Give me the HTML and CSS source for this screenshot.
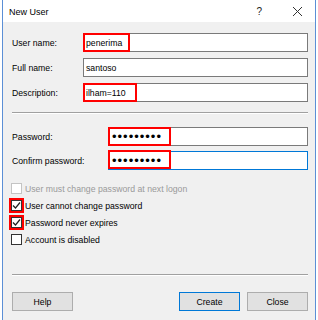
FILE: index.html
```html
<!DOCTYPE html>
<html>
<head lang="en">
<meta charset="UTF-8">
<title>New User</title>
<link rel="stylesheet" href="styles.css">
</head>
<body>
  <div class="window">
    <div class="titlebar">
      <span class="title">New User</span>
      <span class="help-q">?</span>
      <svg class="close-x" width="11" height="11" viewBox="0 0 11 11">
        <path d="M1 1 L10 10 M10 1 L1 10" stroke="#333" stroke-width="1" fill="none"/>
      </svg>
    </div>

    <div class="client">
      <div class="group">
        <div class="field">
          <label>User name:</label>
          <div class="input"><span class="val">penerima</span><span class="mark" style="width:47px"></span></div>
        </div>
        <div class="field">
          <label>Full name:</label>
          <div class="input"><span class="val">santoso</span></div>
        </div>
        <div class="field">
          <label>Description:</label>
          <div class="input"><span class="val">ilham=110</span><span class="mark" style="width:54px"></span></div>
        </div>
      </div>

      <div class="sep"></div>

      <div class="group pw">
        <div class="field">
          <label>Password:</label>
          <div class="input"><span class="dots">&bull;&bull;&bull;&bull;&bull;&bull;&bull;&bull;&bull;</span><span class="mark" style="width:63px"></span></div>
        </div>
        <div class="field">
          <label>Confirm password:</label>
          <div class="input focus"><span class="dots">&bull;&bull;&bull;&bull;&bull;&bull;&bull;&bull;&bull;</span><span class="mark up" style="width:63px"></span></div>
        </div>
      </div>

      <div class="checks">
        <div class="check disabled"><span class="box"></span>User must change password at next logon</div>
        <div class="check"><span class="box checked"><svg width="9" height="9" viewBox="0 0 9 9"><path d="M1 4.5 L3.5 7 L8 1.5" stroke="#222" stroke-width="1.2" fill="none"/></svg><span class="cmark"></span></span>User cannot change password</div>
        <div class="check"><span class="box checked"><svg width="9" height="9" viewBox="0 0 9 9"><path d="M1 4.5 L3.5 7 L8 1.5" stroke="#222" stroke-width="1.2" fill="none"/></svg><span class="cmark"></span></span>Password never expires</div>
        <div class="check"><span class="box"></span>Account is disabled</div>
      </div>

      <div class="sep bottom"></div>

      <div class="buttons">
        <div class="button">Help</div>
        <div class="spacer"></div>
        <div class="button default">Create</div>
        <div class="button">Close</div>
      </div>
    </div>
  </div>
</body>
</html>
```

FILE: styles.css
```css
body {
margin: 0;
background: #fff;
color: #000;
font-family: "Liberation Sans", Arial, sans-serif;
font-size: 8.7px;
}
.window {
margin-left: 2px;
width: 314px;
height: 320px;
box-sizing: border-box;
border-left: 1px solid #5b8fd6;
border-right: 1px solid #5b8fd6;
display: flex;
flex-direction: column;
}
.titlebar {
height: 22px;
background: #fff;
display: flex;
align-items: center;
padding: 1px 0 0 6px;
box-sizing: border-box;
}
.title { font-size: 9px; color: #000; }
.help-q { margin-left: auto; font-size: 10px; color: #222; margin-right: 30px; }
.close-x { margin-right: 12px; }
.client {
flex: 1;
background: #f0f0f0;
padding: 11px 7px 0 9px;
}
.group { display: flex; flex-direction: column; gap: 6px; }
.group.pw { gap: 5px; }
.field { display: flex; height: 19px; align-items: center; }
.field label { width: 71px; flex: none; }
.pw .field label { width: 96px; }
.input {
position: relative;
flex: 1;
height: 19px;
box-sizing: border-box;
background: #fff;
border: 1px solid #7a7a7a;
display: flex;
align-items: center;
padding-left: 2px;
}
.input.focus { border-color: #0078d7; }
.dots { font-size: 13px; letter-spacing: 1px; line-height: 17px; padding-left: 1px; }
.mark {
position: absolute;
left: -1px;
top: -1px;
bottom: -1px;
box-sizing: border-box;
border: 2px solid #f00;
}
.mark.up { top: -2px; bottom: 0; }
.sep {
margin: 10px 0 13px;
border-top: 1px solid #a0a0a0;
border-bottom: 1px solid #fff;
}
.sep.bottom { margin: 26px 0 16px; }
.checks { margin-top: 10px; display: flex; flex-direction: column; }
.check { height: 17px; display: flex; align-items: center; }
.check.disabled { color: #9a9a9a; }
.box {
position: relative;
width: 11px;
height: 11px;
box-sizing: border-box;
border: 1px solid #333;
background: #fff;
margin: 0 3px 0 -1px;
display: flex;
align-items: center;
justify-content: center;
}
.disabled .box { border-color: #c4c4c4; }
.cmark {
position: absolute;
left: -3px;
top: -3px;
width: 15px;
height: 15px;
box-sizing: border-box;
border: 2px solid #f00;
}
.buttons { display: flex; gap: 7px; }
.spacer { flex: 1; }
.button {
width: 61px;
height: 19px;
box-sizing: border-box;
background: #e1e1e1;
border: 1px solid #adadad;
display: flex;
align-items: center;
justify-content: center;
}
.button.default { border-color: #0078d7; }
```
